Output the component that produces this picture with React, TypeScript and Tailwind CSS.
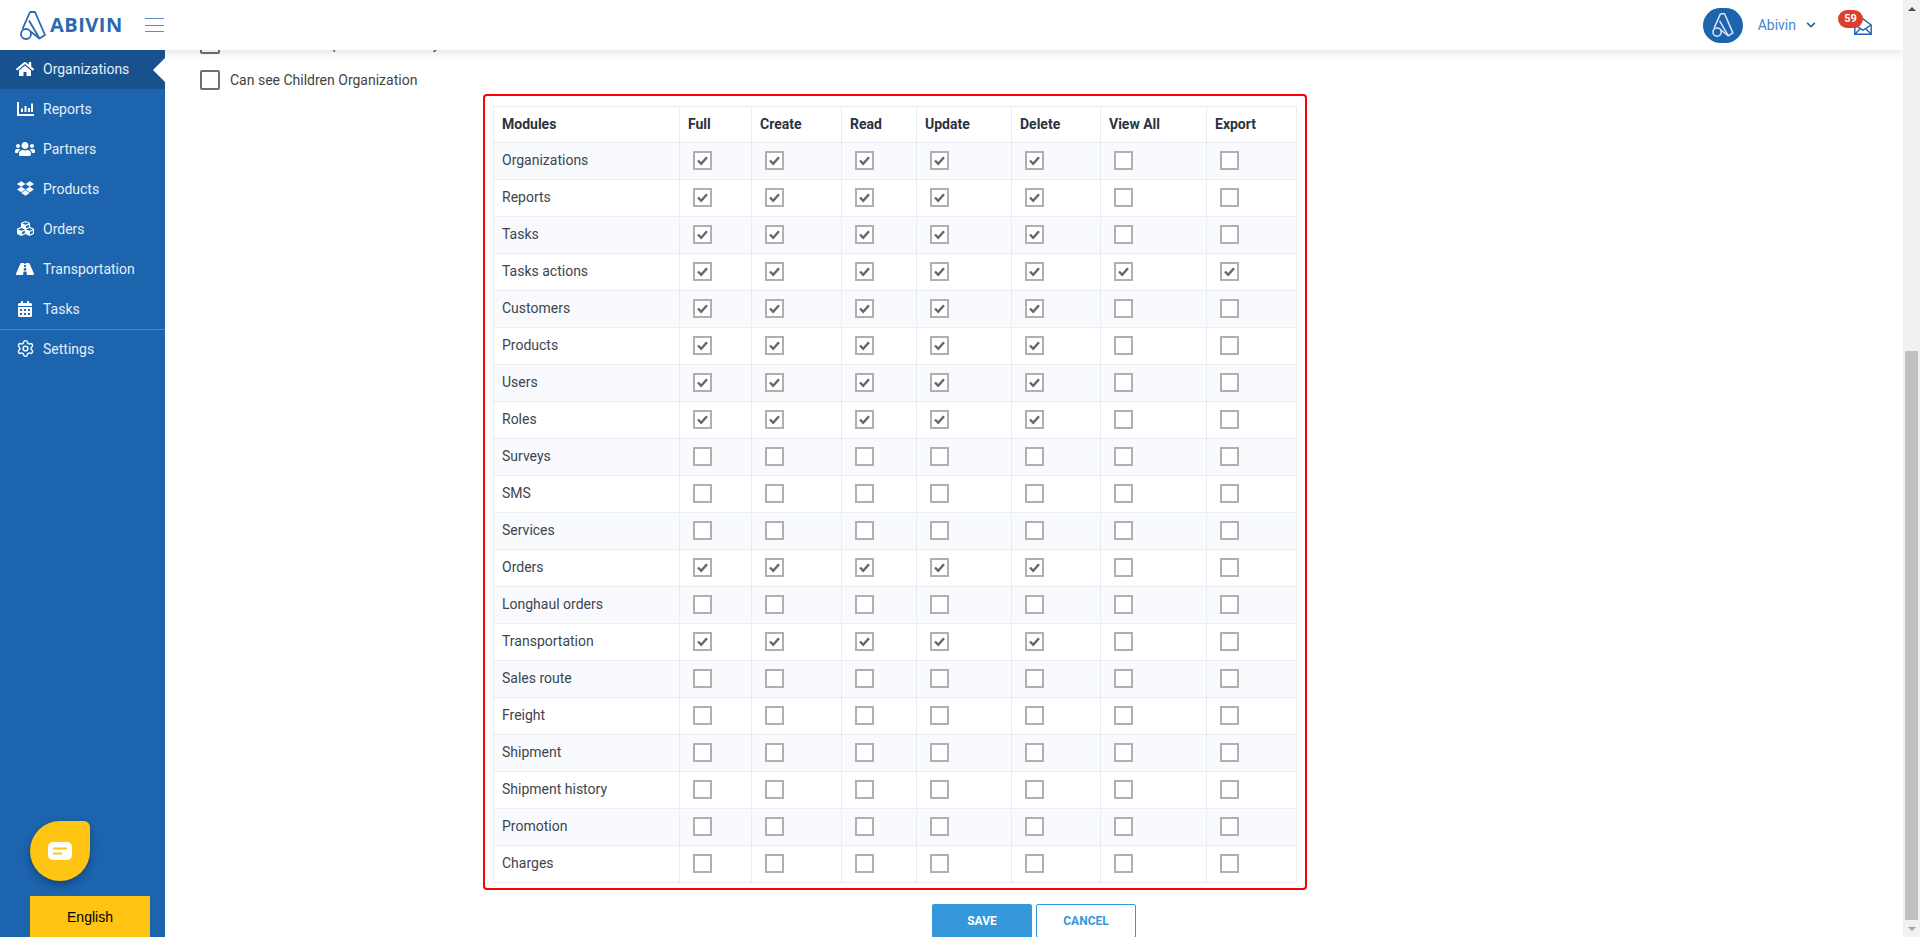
import React from "react";
import { FaCalendarAlt, FaChevronDown, FaCubes, FaDropbox, FaHome, FaRoad, FaUsers } from "react-icons/fa";
import { Settings } from "lucide-react";

const ReportsIcon = () => (
  <svg viewBox="0 0 17 14" className="h-[14px] w-[17px]" fill="currentColor">
    <path d="M0 0h2v12h15v2H0z" />
    <path d="M4 6.5h2V10H4zM7.5 4H9.5v6h-2zM11 6h2v4h-2zM14 1.5h2V10h-2z" />
  </svg>
);

const menu = [
  { label: "Organizations", icon: <FaHome size={18} />, active: true },
  { label: "Reports", icon: <ReportsIcon /> },
  { label: "Partners", icon: <FaUsers size={20} /> },
  { label: "Products", icon: <FaDropbox size={17} /> },
  { label: "Orders", icon: <FaCubes size={17} /> },
  { label: "Transportation", icon: <FaRoad size={18} /> },
  { label: "Tasks", icon: <FaCalendarAlt size={16} />, divider: true },
  { label: "Settings", icon: <Settings size={19} strokeWidth={1.8} /> },
];

const columns = [
  { name: "Full", width: "w-[72px]" },
  { name: "Create", width: "w-[90px]" },
  { name: "Read", width: "w-[75px]" },
  { name: "Update", width: "w-[95px]" },
  { name: "Delete", width: "w-[89px]" },
  { name: "View All", width: "w-[106px]" },
  { name: "Export", width: "w-[90px]" },
];

// number of leading columns that are ticked in each row
const modules: { name: string; checked: number }[] = [
  { name: "Organizations", checked: 5 },
  { name: "Reports", checked: 5 },
  { name: "Tasks", checked: 5 },
  { name: "Tasks actions", checked: 7 },
  { name: "Customers", checked: 5 },
  { name: "Products", checked: 5 },
  { name: "Users", checked: 5 },
  { name: "Roles", checked: 5 },
  { name: "Surveys", checked: 0 },
  { name: "SMS", checked: 0 },
  { name: "Services", checked: 0 },
  { name: "Orders", checked: 5 },
  { name: "Longhaul orders", checked: 0 },
  { name: "Transportation", checked: 5 },
  { name: "Sales route", checked: 0 },
  { name: "Freight", checked: 0 },
  { name: "Shipment", checked: 0 },
  { name: "Shipment history", checked: 0 },
  { name: "Promotion", checked: 0 },
  { name: "Charges", checked: 0 },
];

const Logo = ({ className }: { className: string }) => (
  <svg viewBox="0 0 27 29" fill="none" stroke="currentColor" strokeWidth="1.8" strokeLinejoin="round" className={className}>
    <path d="M11 1h5l10 23-5.5 3.5L10 9.5" />
    <path d="M11 1 3.5 18" />
    <circle cx="7" cy="23" r="5" />
    <path d="M11.5 20.5 20.5 27.5" />
  </svg>
);

const Checkbox = ({ checked }: { checked: boolean }) => (
  <span className="flex h-[19px] w-[19px] items-center justify-center border-2 border-[#b0b0b0] bg-white">
    {checked && (
      <svg viewBox="0 0 15 15" className="h-[15px] w-[15px]" fill="none" stroke="#666" strokeWidth="2.4">
        <path d="M3 7.5 6.2 10.8 12 4.2" />
      </svg>
    )}
  </span>
);

const Label = ({ text }: { text: string }) => (
  <label className="flex h-5 items-center gap-[10px] text-sm text-[#444]">
    <span className="h-5 w-5 rounded-[2px] border-2 border-[#707070] bg-white" />
    {text}
  </label>
);

const Sidebar = () => (
  <aside className="relative z-20 flex w-[165px] shrink-0 flex-col bg-[#1c64ae] text-sm">
    {menu.map((item) => (
      <div key={item.label} className={item.divider ? "h-10 border-b border-[#4a85c3]" : "h-10"}>
        <div className={`relative flex h-[39px] items-center gap-2 pb-[2px] pl-[15px] text-[#e6eef7] ${item.active ? "bg-[#17528f]" : ""}`}>
          <span className="flex w-5 justify-center text-white">{item.icon}</span>
          {item.label}
          {item.active && <span className="absolute right-0 top-[8px] h-6 w-3 bg-white [clip-path:polygon(100%_0,0_50%,100%_100%)]" />}
        </div>
      </div>
    ))}
    <div className="mt-auto pl-[30px]">
      <div className="flex h-[60px] w-[60px] items-center justify-center rounded-[30px] rounded-tr-[6px] bg-[#ffc412] shadow-[0_4px_8px_rgba(0,0,0,0.3)]">
        <svg viewBox="0 0 24 18" className="h-[18px] w-6">
          <rect width="24" height="18" rx="5" fill="#fff" />
          <path d="M5 6.5h14M5 11.5h9" stroke="#ffc412" strokeWidth="2" />
        </svg>
      </div>
      <div className="mt-[15px] flex h-[41px] w-[120px] items-center justify-center bg-[#ffc412] font-['Liberation_Sans',sans-serif] text-black">
        English
      </div>
    </div>
  </aside>
);

const Header = () => (
  <header className="relative z-10 flex h-[50px] shrink-0 items-center bg-white pl-[19px] shadow-[0_2px_10px_rgba(0,0,0,0.12)]">
    <Logo className="h-[29px] w-[27px] text-[#2a69b0]" />
    <span className="ml-[4px] font-['Open_Sans',sans-serif] text-[20px] font-bold tracking-[0.5px] text-[#2a69b0]">ABIVIN</span>
    <div className="ml-[22px] flex h-[14px] w-[19px] flex-col justify-between">
      <span className="h-px bg-[#5b8dcb]" />
      <span className="h-px bg-[#5b8dcb]" />
      <span className="h-px bg-[#5b8dcb]" />
    </div>
    <div className="ml-auto flex items-center pr-[31px]">
      <div className="flex h-[35px] w-10 items-center justify-center rounded-full bg-[#1c64ae]">
        <Logo className="h-[24px] w-[23px] text-[#dfe9f4]" />
      </div>
      <span className="ml-[15px] text-sm text-[#4a86c8]">Abivin</span>
      <FaChevronDown size={10} className="ml-[10px] text-[#1c64ae]" />
      <div className="relative ml-[38px] mt-[3px] h-[17px] w-[18px]">
        <svg viewBox="0 0 18 17" fill="none" stroke="#1c64ae" strokeWidth="1.4" className="h-[17px] w-[18px]">
          <path d="M.8 7v9.2h16.4V7L9 .9z" />
          <path d="M.8 7 9 12.2 17.2 7M.8 16.2 6.5 10.6M17.2 16.2 11.5 10.6" />
        </svg>
        <span className="absolute left-[-16px] top-[-8px] flex h-[18px] w-[25px] items-center justify-center rounded-full bg-[#d9402f] text-[11px] font-bold text-white">
          59
        </span>
      </div>
    </div>
  </header>
);

const PermissionTable = () => (
  <div className="ml-[318px] mt-[4px] w-[824px] rounded-[4px] border-2 border-[#ff0000] px-2 pb-[5px] pt-[10px]">
    <table className="w-[803px] table-fixed border-collapse text-sm text-[#3d4550]">
      <thead>
        <tr className="h-9">
          <th className="w-[186px] border border-[#e9ecf1] px-2 pb-[2px] text-left font-bold text-[#2b3340]">Modules</th>
          {columns.map((col) => (
            <th key={col.name} className={`${col.width} border border-[#e9ecf1] px-2 pb-[2px] text-left font-bold text-[#2b3340]`}>
              {col.name}
            </th>
          ))}
        </tr>
      </thead>
      <tbody>
        {modules.map((row, rowIdx) => (
          <tr key={row.name} className={`h-[37px] ${rowIdx % 2 === 0 ? "bg-[#f9fafd]" : "bg-white"}`}>
            <td className="border border-[#e9ecf1] px-2 pb-[2px]">{row.name}</td>
            {columns.map((col, colIdx) => (
              <td key={col.name} className="border border-[#e9ecf1] pb-[2px] pl-[13px]">
                <Checkbox checked={colIdx < row.checked} />
              </td>
            ))}
          </tr>
        ))}
      </tbody>
    </table>
  </div>
);

const Scrollbar = () => (
  <div className="relative z-30 flex h-full w-[17px] shrink-0 flex-col bg-[#f1f1f1]">
    <div className="flex h-[17px] items-center justify-center">
      <span className="h-0 w-0 border-x-[4px] border-b-[4px] border-x-transparent border-b-[#505050]" />
    </div>
    <div className="h-[334px]" />
    <div className="mx-[2px] h-[569px] bg-[#c1c1c1]" />
    <div className="flex flex-1 items-center justify-center">
      <span className="h-0 w-0 border-x-[4px] border-t-[4px] border-x-transparent border-t-[#a3a3a3]" />
    </div>
  </div>
);

export default function App() {
  return (
    <div className="flex h-screen w-full overflow-hidden bg-white font-[Roboto,sans-serif]">
      <div className="flex min-w-0 flex-1 flex-col">
        <Header />
        <div className="flex min-h-0 flex-1">
          <Sidebar />
          <main className="min-w-0 flex-1 overflow-hidden">
            <div className="-mt-4 flex flex-col gap-4 pl-[35px]">
              <Label text="Can see own Shipment Order only" />
              <Label text="Can see Children Organization" />
            </div>
            <PermissionTable />
            <div className="mt-[14px] flex justify-center gap-[4px] text-xs font-bold">
              <button className="h-[34px] w-[100px] rounded-[2px] bg-[#3498db] text-white">SAVE</button>
              <button className="h-[34px] w-[100px] rounded-[2px] border border-[#3498db] bg-white text-[#3498db]">CANCEL</button>
            </div>
          </main>
        </div>
      </div>
      <Scrollbar />
    </div>
  );
}
